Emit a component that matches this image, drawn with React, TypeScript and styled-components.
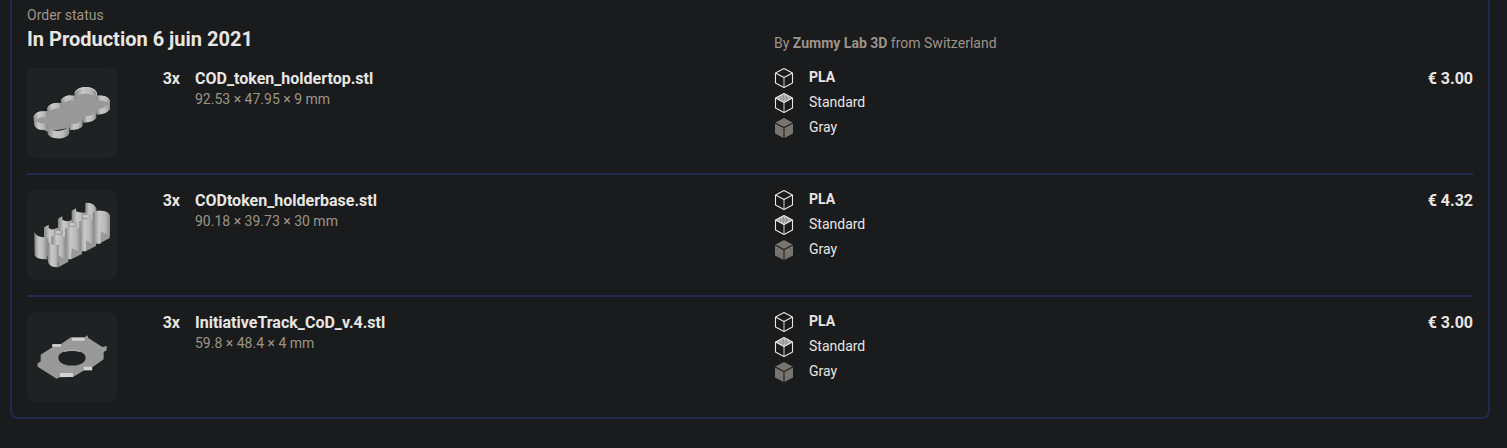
import React from "react";
import styled, { createGlobalStyle } from "styled-components";

const GlobalStyle = createGlobalStyle`
  body {
    margin: 0;
    background: #1a1b1c;
    color: #e8e6e3;
    font-family: Roboto, "Liberation Sans", sans-serif;
    font-size: 14px;
    line-height: 20px;
  }
`;

const Card = styled.main`
  margin: 0 17px 28px 10px;
  padding: 5px 15px 0;
  background: #1a1b1c;
  border: 2px solid #23284f;
  border-top: 0;
  border-radius: 0 0 8px 8px;
`;

const Columns = styled.div`
  display: grid;
  grid-template-columns: 1fr 1fr;
  column-gap: 48px;
`;

const Header = styled(Columns)`
  align-items: end;
  padding-bottom: 15px;
`;

const Label = styled.p`
  margin: 0;
  color: #9d9488;
`;

const Dimensions = styled(Label)`
  line-height: 18px;
`;

const Title = styled.h1`
  margin: 0;
  font-size: 20px;
  line-height: 28px;
  font-weight: 700;
`;

const Items = styled.ul`
  margin: 0;
  padding: 0;
  list-style: none;
`;

const Item = styled.li`
  padding-bottom: 15px;

  & + & {
    padding-top: 15px;
    border-top: 2px solid #23284f;
  }
`;

const Product = styled.div`
  display: grid;
  grid-template-columns: 90px 48px 1fr;
  column-gap: 15px;
`;

const Thumb = styled.svg`
  display: block;
  width: 90px;
  height: 90px;
  border-radius: 8px;
  background: #1e2223;
`;

const Strong = styled.p<{ $align?: "right" }>`
  margin: 0;
  font-size: 16px;
  line-height: 22px;
  font-weight: 700;
  text-align: ${(p) => p.$align ?? "left"};
`;

const Details = styled.div`
  display: flex;
  justify-content: space-between;
`;

const Specs = styled.ul`
  margin: 0;
  padding: 0;
  list-style: none;
`;

const Spec = styled.li<{ $bold?: boolean }>`
  display: flex;
  align-items: flex-start;
  gap: 15px;
  padding-bottom: 5px;
  line-height: 18px;
  font-weight: ${(p) => (p.$bold ? 700 : 400)};
`;

const CubeSvg = styled.svg`
  display: block;
  width: 20px;
  height: 20px;
`;

type CubeKind = "outline" | "layered" | "solid";

function Cube({ kind }: { kind: CubeKind }) {
  if (kind === "solid") {
    return (
      <CubeSvg viewBox="0 0 20 20" fill="#77736e" aria-hidden="true">
        <path d="M10 0 18.6 4.5 10 9.1 1.4 4.5Z" />
        <path d="M1 5.4 9.5 10V20L1 15.4Z" />
        <path d="M19 5.4 10.5 10V20L19 15.4Z" />
      </CubeSvg>
    );
  }
  return (
    <CubeSvg viewBox="0 0 20 20" fill="none" stroke="#e8e6e3" strokeLinejoin="round" aria-hidden="true">
      {kind === "layered" && (
        <>
          <path d="M10 .6 18.5 5 10 9.6 1.5 5Z" fill="#a19f9d" stroke="none" />
          <path d="M7 3h1M10 3h1M13 3h1M5 5h1M8 5h1M11 5h1M14 5h1M7 7h1M10 7h1M13 7h1" stroke="#f1efec" />
          <path d="M8.5 4h1M11.5 4h1M6.5 6h1M9.5 6h1M12.5 6h1" stroke="#6d6c6b" />
        </>
      )}
      <path d="M10 .6 18.5 5V15L10 19.4 1.5 15V5Z M1.5 5 10 9.6 18.5 5" strokeWidth="1.1" />
      <path d="M10 9.6V19.4" strokeWidth="1.1" opacity=".8" />
    </CubeSvg>
  );
}

function Wall({ id }: { id: string }) {
  return (
    <linearGradient id={id}>
      <stop offset="0" stopColor="#858585" />
      <stop offset=".35" stopColor="#c8c8c8" />
      <stop offset=".7" stopColor="#bababa" />
      <stop offset="1" stopColor="#8b8b8b" />
    </linearGradient>
  );
}

function HolderTop() {
  return (
    <Thumb viewBox="21 24 270 270" role="img" aria-label="COD_token_holdertop.stl">
      <defs><Wall id="topWall" /></defs>
      <path fill="#999" d="M41 171Q46 154 83 155V143Q90 129 123 131V120Q132 106 164 109V99C171 77 224 78 230 99V108Q264 105 270 125V148L231 160 190 180 150 203 83 215 43 195Z" />
      <g fill="url(#topWall)">
        <path d="M41 172Q44 155 66 154L84 157V174L76 171Q54 172 48 182Z" />
        <path d="M82 145Q88 130 108 129L126 133V150L115 145Q92 147 82 159Z" />
        <path d="M123 122Q129 108 149 106L168 109V126L153 121Q131 124 123 136Z" />
        <path d="M164 100C167 75 226 76 230 98V118C222 96 173 96 164 116Z" />
        <path d="M229 108Q264 103 270 123V135Q260 118 230 122Z" />
        <path d="M41 174Q48 193 82 190V209Q48 214 43 195Z" />
        <path d="M81 197C90 219 137 218 148 195V218C145 240 88 242 83 220Z" />
        <path d="M147 193Q176 194 188 177V198Q177 211 150 210Z" />
        <path d="M188 170Q217 170 229 154V174Q219 188 190 188Z" />
        <path d="M229 147Q257 149 270 126V148Q259 164 231 164Z" />
      </g>
      <path fill="none" stroke="#d0d0d0" strokeWidth="2" d="M42 171Q46 156 68 155H83M83 145Q90 130 111 130H123M124 121Q132 107 154 108H164M165 99C171 77 224 78 230 99V108Q264 105 269 124" />
    </Thumb>
  );
}

function HolderBase() {
  return (
    <Thumb viewBox="21 15 270 270" role="img" aria-label="CODtoken_holderbase.stl">
      <defs><Wall id="baseWall" /></defs>
      <path fill="#9b9b9b" d="M72 140 114 128 155 104 196 84 229 90V170L100 228 72 205Z" />
      <g fill="url(#baseWall)">
        <path d="M196 53Q222 52 229 70V115H196Z" />
        <path d="M155 77 168 70V79Q184 86 198 82V140H155Z" />
        <path d="M114 101 127 94V104Q143 113 160 106V165H114Z" />
        <path d="M72 127 86 119V129Q100 139 119 131V185H72Z" />
        <path d="M43 140Q49 158 81 157V223Q49 224 44 211Z" />
      </g>
      <path fill="#999" d="M116 200 145 222V230L116 246ZM154 180 186 197V207L155 222ZM198 157 228 175V183L197 199ZM237 134 269 150V159L240 175Z" />
      <g fill="url(#baseWall)">
        <path d="M219 83Q228 74 246 77Q266 79 270 91V154L242 139V176H219Z" />
        <path d="M178 109Q199 96 222 106V179L198 166V199H178Z" />
        <path d="M135 131Q158 119 182 132V203L155 189V223H135Z" />
        <path d="M94 155Q116 143 138 157V228L116 210V232H94Z" />
        <path d="M83 165Q86 181 116 180V247Q88 248 84 231Z" />
      </g>
      <g fill="#c9c9c9">
        <ellipse cx="115" cy="142" rx="8" ry="5" />
        <ellipse cx="156" cy="118" rx="8" ry="5" />
        <ellipse cx="197" cy="94" rx="8" ry="5" />
      </g>
      <path fill="none" stroke="#838383" strokeWidth="2" d="M83 160V224M104 135V149M127 136V150M146 111V126M169 112V126M187 87V102M210 88V102M219 84V104" />
    </Thumb>
  );
}

function Track() {
  return (
    <Thumb viewBox="21 21 270 270" role="img" aria-label="InitiativeTrack_CoD_v.4.stl">
      <path
        fill="#999"
        fillRule="evenodd"
        d="M52 176 62 169V149L97 127V117H123L153 97H194L202 91 205 99 247 126 260 123V136L251 141V163L217 187V196H193L159 216 119 217 110 221 53 185ZM115 158C115 189 197 190 197 158C197 128 115 128 115 158Z"
      />
      <path fill="#d2d2d2" d="M97 118H123V125H97ZM156 98H194V107H156ZM191 185H216V196H191ZM120 204H159V216H120Z" />
      <path fill="none" stroke="#c4c4c4" strokeWidth="3" d="M132 139Q156 132 180 139" />
    </Thumb>
  );
}

const ORDER = [
  { file: "COD_token_holdertop.stl", size: "92.53 × 47.95 × 9 mm", price: "€ 3.00", Picture: HolderTop },
  { file: "CODtoken_holderbase.stl", size: "90.18 × 39.73 × 30 mm", price: "€ 4.32", Picture: HolderBase },
  { file: "InitiativeTrack_CoD_v.4.stl", size: "59.8 × 48.4 × 4 mm", price: "€ 3.00", Picture: Track },
];

export default function App() {
  return (
    <>
      <GlobalStyle />
      <Card>
        <Header>
          <div>
            <Label>Order status</Label>
            <Title>In Production 6 juin 2021</Title>
          </div>
          <Label>
            By <b>Zummy Lab 3D</b> from Switzerland
          </Label>
        </Header>
        <Items>
          {ORDER.map(({ file, size, price, Picture }) => (
            <Item key={file}>
              <Columns>
                <Product>
                  <Picture />
                  <Strong $align="right">3x</Strong>
                  <div>
                    <Strong>{file}</Strong>
                    <Dimensions>{size}</Dimensions>
                  </div>
                </Product>
                <Details>
                  <Specs>
                    <Spec $bold><Cube kind="outline" />PLA</Spec>
                    <Spec><Cube kind="layered" />Standard</Spec>
                    <Spec><Cube kind="solid" />Gray</Spec>
                  </Specs>
                  <Strong>{price}</Strong>
                </Details>
              </Columns>
            </Item>
          ))}
        </Items>
      </Card>
    </>
  );
}
